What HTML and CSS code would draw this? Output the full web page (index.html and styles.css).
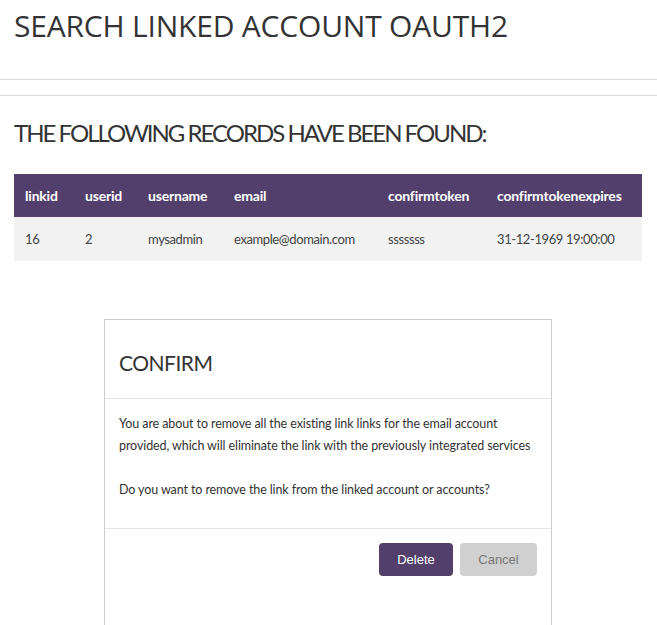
FILE: index.html
```html
<!DOCTYPE html>
<html lang="en">
  <head>
    <meta charset="UTF-8" />
    <meta name="viewport" content="width=device-width, initial-scale=1.0" />
    <title>Search linked account OAuth2</title>
    <link rel="stylesheet" href="styles.css">
  </head>
  <body>
    <div class="page-header">
      <h1>SEARCH LINKED ACCOUNT OAUTH2</h1>
    </div>
    <hr class="divider" />

    <div class="content">
      <h2>THE FOLLOWING RECORDS HAVE BEEN FOUND:</h2>

      <table class="records">
        <thead>
          <tr>
            <th class="col-linkid">linkid</th>
            <th class="col-userid">userid</th>
            <th class="col-username">username</th>
            <th class="col-email">email</th>
            <th class="col-token">confirmtoken</th>
            <th>confirmtokenexpires</th>
          </tr>
        </thead>
        <tbody>
          <tr>
            <td>16</td>
            <td>2</td>
            <td>mysadmin</td>
            <td>example@domain.com</td>
            <td>sssssss</td>
            <td>31-12-1969 19:00:00</td>
          </tr>
        </tbody>
      </table>
    </div>

    <div class="modal">
      <div class="modal-header">
        <h3>CONFIRM</h3>
      </div>
      <div class="modal-body">
        <p>
          You are about to remove all the existing link links for the email account
          provided, which will eliminate the link with the previously integrated services
        </p>
        <p>Do you want to remove the link from the linked account or accounts?</p>
      </div>
      <div class="modal-footer">
        <button class="btn btn-primary">Delete</button>
        <button class="btn btn-secondary">Cancel</button>
      </div>
    </div>
  </body>
</html>
```

FILE: styles.css
```css
* {
  margin: 0;
  padding: 0;
  box-sizing: border-box;
}

body {
  font-family: Lato, "Liberation Sans", sans-serif;
  color: #333;
  background: white;
  overflow: hidden;
}

.page-header {
  padding: 5px 14px 0;
  height: 80px;
  border-bottom: 1px solid #ddd;
}

h1 {
  font-family: "Open Sans", sans-serif;
  font-size: 30px;
  font-weight: 400;
  color: #333;
  letter-spacing: -0.2px;
}

.divider {
  border: none;
  border-top: 1px solid #ddd;
  margin-top: 15px;
}

.content {
  padding: 0 15px 0 14px;
}

h2 {
  font-size: 24px;
  font-weight: 400;
  color: #333;
  margin-top: 22px;
  letter-spacing: -2px;
}

.records {
  width: 100%;
  border-collapse: collapse;
  margin-top: 27px;
  font-size: 13px;
  letter-spacing: -0.4px;
}

.records th {
  background: #533f6b;
  color: white;
  text-align: left;
  font-weight: 700;
  height: 43px;
  padding: 0 11px;
  font-size: 14px;
  letter-spacing: -0.2px;
}

.records td {
  background: #f2f2f2;
  height: 44px;
  padding: 0 11px;
  color: #444;
}

.col-linkid {
  width: 60px;
}

.col-userid {
  width: 63px;
}

.col-username {
  width: 86px;
}

.col-email {
  width: 154px;
}

.col-token {
  width: 109px;
}

.modal {
  width: 448px;
  height: 320px;
  margin: 58px 0 0 104px;
  border: 1px solid #ccc;
  border-bottom: none;
}

.modal-header {
  padding: 30px 14px 0;
  height: 79px;
  border-bottom: 1px solid #e5e5e5;
}

h3 {
  font-size: 21px;
  font-weight: 400;
  color: #333;
  letter-spacing: -0.5px;
}

.modal-body {
  padding: 14px 14px 0;
  height: 130px;
  border-bottom: 1px solid #e5e5e5;
  font-size: 12.5px;
  line-height: 22px;
  letter-spacing: -0.1px;
  color: #333;
}

.modal-body p + p {
  margin-top: 22px;
}

.modal-footer {
  display: flex;
  justify-content: flex-end;
  gap: 7px;
  padding: 14px 14px 0;
}

.btn {
  font-family: "Liberation Sans", Arial, sans-serif;
  font-size: 13px;
  height: 33px;
  border: none;
  border-radius: 4px;
  cursor: pointer;
}

.btn-primary {
  background: #533f6b;
  color: white;
  width: 74px;
}

.btn-secondary {
  background: #d0d0d0;
  color: #777;
  width: 77px;
}
```
